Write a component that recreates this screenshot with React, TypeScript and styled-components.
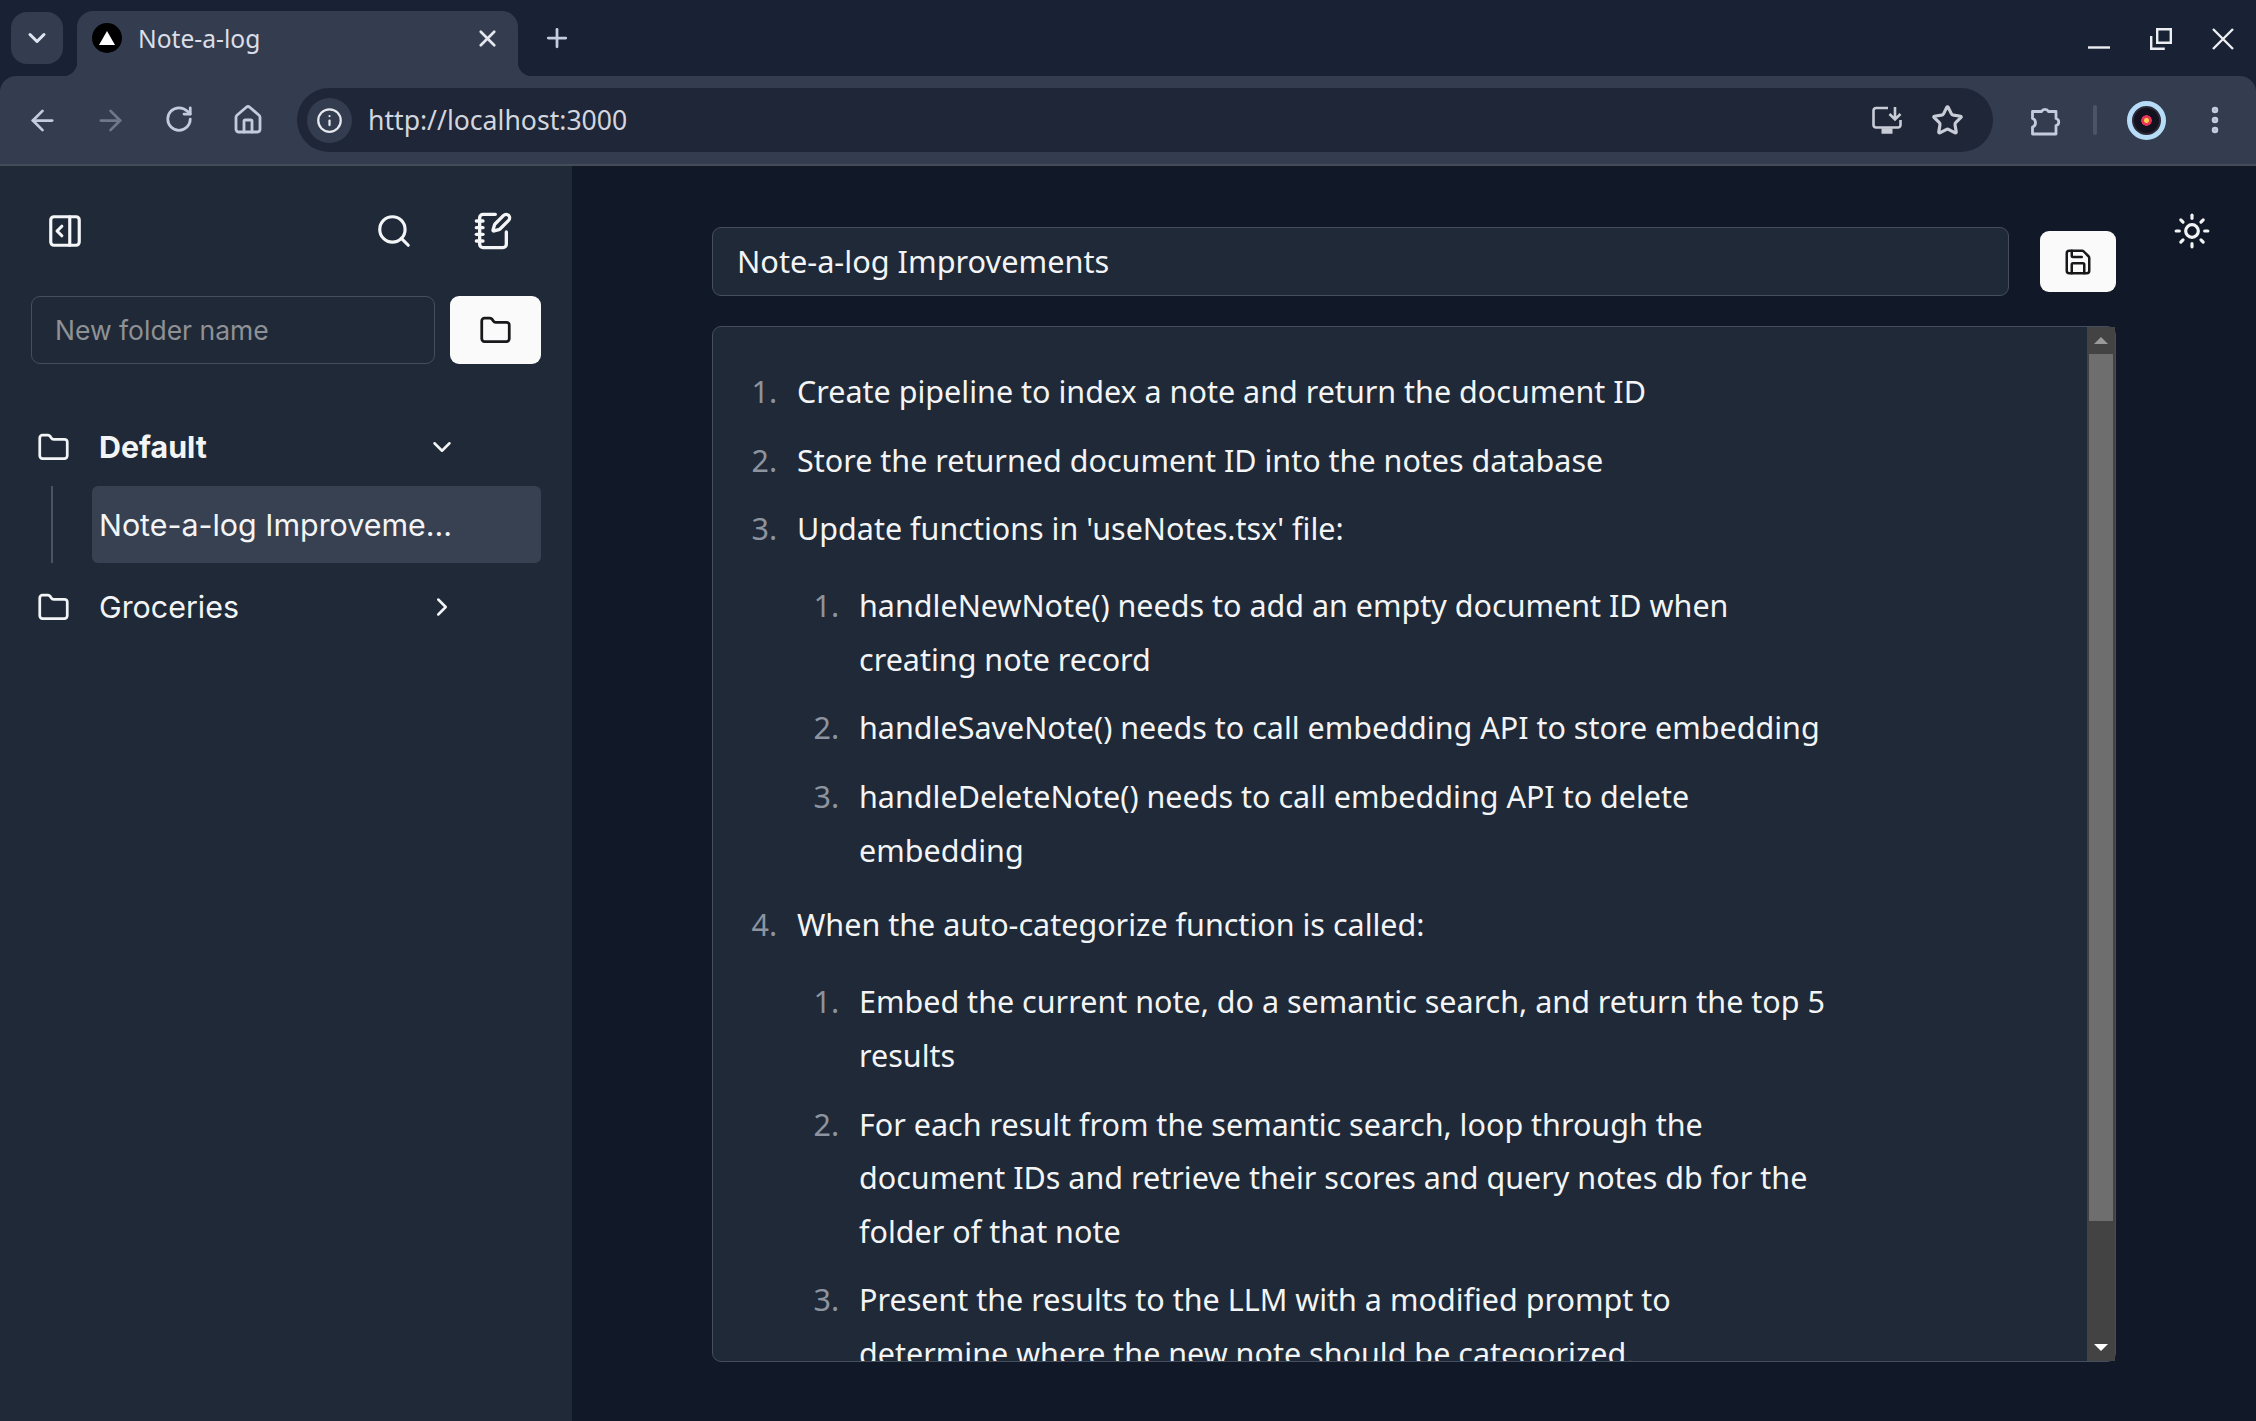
import React from 'react'
import styled, { createGlobalStyle } from 'styled-components'
import { ArrowLeft, ArrowRight, ChevronDown, ChevronRight, Folder, Home, Info, MoreVertical, NotebookPen, PanelRightOpen, Plus, RotateCw, Save, Search, Star, Sun, X } from 'lucide-react'

const GlobalStyle = createGlobalStyle`
  html, body {
    margin: 0;
    padding: 0;
    height: 100%;
    background: #111827;
    overflow: hidden;
  }
  * { box-sizing: border-box; }
`

const Page = styled.div`
  width: 2256px;
  height: 1421px;
  display: flex;
  flex-direction: column;
  font-family: 'Inter', sans-serif;
  color: #f9fafb;
`

const BrowserChrome = styled.header`
  background: #182234;
  font-family: 'Noto Sans', sans-serif;
`

const TabStrip = styled.div`
  height: 76px;
  display: flex;
  align-items: flex-end;
  padding-left: 11px;
`

const TabSearch = styled.div`
  width: 52px;
  height: 52px;
  margin-bottom: 12px;
  border-radius: 16px;
  background: #343d4f;
  color: #dfe4f0;
  display: flex;
  align-items: center;
  justify-content: center;
`

const Tab = styled.div`
  position: relative;
  width: 441px;
  height: 65px;
  margin-left: 14px;
  padding: 12px 17px 0 15px;
  border-radius: 16px 16px 0 0;
  background: #343d4f;
  display: flex;
  align-items: flex-start;
  font-size: 24.6px;
  line-height: 32px;
  color: #dbdee6;

  &::before,
  &::after {
    content: '';
    position: absolute;
    bottom: 0;
    width: 14px;
    height: 14px;
  }
  &::before {
    left: -14px;
    background: radial-gradient(circle at 0 0, transparent 14px, #343d4f 14.5px);
  }
  &::after {
    right: -14px;
    background: radial-gradient(circle at 100% 0, transparent 14px, #343d4f 14.5px);
  }
`

const Favicon = styled.div`
  width: 30px;
  height: 30px;
  border-radius: 50%;
  background: #000;
  margin-right: 16px;
  display: flex;
  align-items: center;
  justify-content: center;
`

const TabTitle = styled.span`
  flex: 1;
`

const TabClose = styled.div`
  height: 30px;
  display: flex;
  align-items: center;
  color: #e4e7ee;
`

const NewTab = styled.div`
  margin: 0 0 23px 24px;
  height: 30px;
  display: flex;
  align-items: center;
  color: #c5cde0;
`

const WindowControls = styled.div`
  margin-left: auto;
  height: 76px;
  display: flex;
  align-items: flex-start;
  padding: 28px 22px 0 0;
  color: #eceef2;
`

const WindowGlyph = styled.svg`
  width: 22px;
  height: 22px;
  display: block;
  margin-left: 40px;
`

const Toolbar = styled.div`
  height: 90px;
  background: #343d4f;
  border-bottom: 2px solid #454b57;
  border-radius: 16px 16px 0 0;
  display: flex;
  align-items: center;
`

const NavGroup = styled.div`
  display: flex;
  padding-left: 8px;
  width: 297px;
`

const NavButton = styled.div<{ $dim?: boolean }>`
  width: 68.5px;
  display: flex;
  justify-content: center;
  color: ${p => (p.$dim ? '#6f7788' : '#c3cbdd')};
`

const Omnibox = styled.div`
  width: 1696px;
  height: 64px;
  border-radius: 32px;
  background: #1e2637;
  display: flex;
  align-items: center;
  padding: 0 29px 0 10px;
`

const SiteInfo = styled.div`
  width: 45px;
  height: 45px;
  border-radius: 50%;
  background: #343d4f;
  color: #e6e8ee;
  display: flex;
  align-items: center;
  justify-content: center;
  margin-right: 16px;
`

const Url = styled.span`
  flex: 1;
  font-size: 26.6px;
  color: #d3d6de;
`

const OmniAction = styled.div`
  display: flex;
  align-items: center;
  color: #c8ccd6;
  margin-left: 29px;
`

const ToolbarEnd = styled.div`
  flex: 1;
  display: flex;
  align-items: center;
  color: #c3cbdd;
  padding-left: 37px;
`

const Divider = styled.div`
  width: 4px;
  height: 30px;
  border-radius: 2px;
  background: #4c5567;
  margin: 0 30px 0 31px;
`

const Avatar = styled.div`
  width: 39px;
  height: 39px;
  border-radius: 50%;
  background: radial-gradient(circle, #f7d24a 0 2px, #e8335a 3px 5px, #14121f 5.5px 12px, #2b2a36 13px 14px);
  border: 5px solid #b6dcf8;
`

const Kebab = styled.div`
  margin-left: 32px;
  color: #c3cbdd;
  display: flex;
`

const Body = styled.div`
  flex: 1;
  display: flex;
  min-height: 0;
`

const Sidebar = styled.aside`
  width: 572px;
  background: #1f2937;
  padding: 0 31px;
`

const SideTop = styled.div`
  height: 130px;
  display: flex;
  align-items: center;
  color: #f4f5f7;
  padding: 0 28px 0 15px;
`

const PanelToggle = styled.div`
  display: flex;
  margin-right: auto;
`

const SideIcon = styled.div`
  display: flex;
  margin-left: 60px;
`

const FolderForm = styled.div`
  display: flex;
  gap: 15px;
`

const FolderInput = styled.input`
  width: 404px;
  height: 68px;
  padding: 0 23px;
  background: transparent;
  border: 1px solid #444e5d;
  border-radius: 9px;
  font: 400 26.5px 'Inter', sans-serif;
  color: #f9fafb;
  &::placeholder {
    color: #8f9195;
    opacity: 1;
  }
`

const WhiteButton = styled.button`
  background: #fafafa;
  border: none;
  border-radius: 9px;
  color: #18181b;
  display: flex;
  align-items: center;
  justify-content: center;
  padding: 0;
`

const FolderButton = styled(WhiteButton)`
  width: 91px;
  height: 68px;
`

const Tree = styled.div`
  margin-top: 59px;
`

const FolderRow = styled.div<{ $open?: boolean }>`
  height: 48px;
  display: flex;
  align-items: center;
  padding-left: 6px;
  font-size: 30.4px;
  font-weight: ${p => (p.$open ? 700 : 400)};
  color: #f3f4f6;
`

const FolderName = styled.span`
  width: 328px;
  margin-left: 29px;
`

const NoteBranch = styled.div`
  display: flex;
  margin: 15px 0 20px 20px;
  border-left: 2px solid #4a5361;
  padding-left: 39px;
`

const NoteItem = styled.div`
  width: 100%;
  height: 77px;
  padding: 0 7px;
  border-radius: 6px;
  background: #374151;
  display: flex;
  align-items: center;
  font-size: 30.4px;
  color: #f3f4f6;
  white-space: nowrap;
`

const Main = styled.main`
  flex: 1;
  display: flex;
  padding-left: 140px;
  position: relative;
`

const Column = styled.div`
  width: 1404px;
  padding-top: 61px;
  display: flex;
  flex-direction: column;
`

const TitleRow = styled.div`
  display: flex;
  align-items: center;
  gap: 31px;
`

const TitleInput = styled.div`
  flex: 1;
  height: 69px;
  padding: 0 24px 2px;
  border: 1px solid #444e5d;
  border-radius: 9px;
  background: #1f2937;
  display: flex;
  align-items: center;
  font: 400 30.7px 'Noto Sans', sans-serif;
  color: #f3f4f6;
`

const SaveButton = styled(WhiteButton)`
  width: 76px;
  height: 61px;
`

const Editor = styled.div`
  margin-top: 30px;
  height: 1036px;
  border: 1px solid #444e5d;
  border-radius: 9px;
  background: #1f2937;
  display: flex;
`

const EditorContent = styled.div`
  flex: 1;
  overflow: hidden;
  padding-top: 21px;
  font-family: 'Noto Sans', sans-serif;
  font-size: 30.5px;
  line-height: 53.6px;
  color: #f3f4f6;
`

const NoteList = styled.ol<{ $nested?: boolean }>`
  margin: ${p => (p.$nested ? '23.5px 0 21px' : '17px 0 0')};
  padding: 0 0 0 ${p => (p.$nested ? '50px' : '72px')};
  width: ${p => (p.$nested ? 'auto' : '1113px')};
  & > li {
    padding-left: 12px;
    margin-top: 15px;
  }
  & > li::marker {
    color: #8d949f;
  }
`

const ScrollTrack = styled.div`
  width: 28px;
  background: #434343;
  display: flex;
  flex-direction: column;
`

const ScrollArrow = styled.div<{ $down?: boolean }>`
  height: 27px;
  display: flex;
  align-items: center;
  justify-content: center;
  &::before {
    content: '';
    width: 0;
    height: 0;
    border-left: 7px solid transparent;
    border-right: 7px solid transparent;
    ${p => (p.$down ? 'border-top: 7px solid #fff;' : 'border-bottom: 7px solid #9a9a9a;')}
  }
`

const ScrollThumb = styled.div`
  height: 867px;
  margin: 0 2px;
  background: #6e6e6e;
`

const ScrollRest = styled.div`
  flex: 1;
`

const ThemeToggle = styled.div`
  position: absolute;
  right: 45px;
  top: 46px;
  color: #f3f4f6;
  display: flex;
`

const InstallIcon = () => (
  <svg width="30" height="28" viewBox="0 0 30 28" fill="none" stroke="currentColor" strokeWidth="2.6">
    <path d="M16 2H4a2.5 2.5 0 0 0-2.5 2.5V19a2.5 2.5 0 0 0 2.5 2.5h22a2.5 2.5 0 0 0 2.5-2.5v-5" />
    <path d="M23 1v12M17.5 8l5.5 5.5L28.5 8" />
    <path d="M9.5 25h11" strokeWidth="5.5" />
  </svg>
)

const PuzzleIcon = () => (
  <svg width="32" height="32" viewBox="0 0 32 32" fill="none" stroke="currentColor" strokeWidth="2.8" strokeLinejoin="round">
    <path d="M2.5 7.5h9a4 4 0 0 1 7 0h7.5v7a3.6 3.6 0 0 1 0 7v8.5H2.5v-7a4.5 4.5 0 0 0 0-8.5z" />
  </svg>
)

const App: React.FC = () => {
  return (
    <Page>
      <GlobalStyle />
      <BrowserChrome>
        <TabStrip>
          <TabSearch><ChevronDown size={28} strokeWidth={2.6} /></TabSearch>
          <Tab>
            <Favicon>
              <svg width="16" height="14" viewBox="0 0 16 14"><path d="M8 0l8 14H0z" fill="#fff" /></svg>
            </Favicon>
            <TabTitle>Note-a-log</TabTitle>
            <TabClose><X size={27} strokeWidth={2.4} /></TabClose>
          </Tab>
          <NewTab><Plus size={30} strokeWidth={2.2} /></NewTab>
          <WindowControls>
            <WindowGlyph viewBox="0 0 22 22" fill="none" stroke="currentColor" strokeWidth="2.4">
              <path d="M0 19.5h22" />
            </WindowGlyph>
            <WindowGlyph viewBox="0 0 22 22" fill="none" stroke="currentColor" strokeWidth="2.4">
              <path d="M7.2 1.2h13.6v13.6H7.2z" />
              <path d="M1.2 8v12.8h13.6" />
            </WindowGlyph>
            <WindowGlyph viewBox="0 0 22 22" fill="none" stroke="currentColor" strokeWidth="2.4">
              <path d="M1 1l20 20M21 1L1 21" />
            </WindowGlyph>
          </WindowControls>
        </TabStrip>
        <Toolbar>
          <NavGroup>
            <NavButton><ArrowLeft size={33} strokeWidth={2} /></NavButton>
            <NavButton $dim><ArrowRight size={33} strokeWidth={2} /></NavButton>
            <NavButton><RotateCw size={30} strokeWidth={2.2} /></NavButton>
            <NavButton><Home size={32} strokeWidth={2.1} /></NavButton>
          </NavGroup>
          <Omnibox>
            <SiteInfo><Info size={27} strokeWidth={2} /></SiteInfo>
            <Url>http://localhost:3000</Url>
            <OmniAction><InstallIcon /></OmniAction>
            <OmniAction><Star size={33} strokeWidth={2.3} /></OmniAction>
          </Omnibox>
          <ToolbarEnd>
            <PuzzleIcon />
            <Divider />
            <Avatar />
            <Kebab><MoreVertical size={34} strokeWidth={2.6} /></Kebab>
          </ToolbarEnd>
        </Toolbar>
      </BrowserChrome>
      <Body>
        <Sidebar>
          <SideTop>
            <PanelToggle><PanelRightOpen size={38} strokeWidth={2} /></PanelToggle>
            <SideIcon><Search size={38} strokeWidth={2} /></SideIcon>
            <SideIcon><NotebookPen size={40} strokeWidth={2} /></SideIcon>
          </SideTop>
          <FolderForm>
            <FolderInput placeholder="New folder name" readOnly />
            <FolderButton><Folder size={33} strokeWidth={2} /></FolderButton>
          </FolderForm>
          <Tree>
            <FolderRow $open>
              <Folder size={33} strokeWidth={2} />
              <FolderName>Default</FolderName>
              <ChevronDown size={30} strokeWidth={2} />
            </FolderRow>
            <NoteBranch>
              <NoteItem>Note-a-log Improveme...</NoteItem>
            </NoteBranch>
            <FolderRow>
              <Folder size={33} strokeWidth={2} />
              <FolderName>Groceries</FolderName>
              <ChevronRight size={30} strokeWidth={2} />
            </FolderRow>
          </Tree>
        </Sidebar>
        <Main>
          <Column>
            <TitleRow>
              <TitleInput>Note-a-log Improvements</TitleInput>
              <SaveButton><Save size={30} strokeWidth={2} /></SaveButton>
            </TitleRow>
            <Editor>
              <EditorContent>
                <NoteList>
                  <li>Create pipeline to index a note and return the document ID</li>
                  <li>Store the returned document ID into the notes database</li>
                  <li>
                    Update functions in 'useNotes.tsx' file:
                    <NoteList $nested>
                      <li>handleNewNote() needs to add an empty document ID when creating note record</li>
                      <li>handleSaveNote() needs to call embedding API to store embedding</li>
                      <li>handleDeleteNote() needs to call embedding API to delete embedding</li>
                    </NoteList>
                  </li>
                  <li>
                    When the auto-categorize function is called:
                    <NoteList $nested>
                      <li>Embed the current note, do a semantic search, and return the top 5 results</li>
                      <li>For each result from the semantic search, loop through the document IDs and retrieve their scores and query notes db for the folder of that note</li>
                      <li>Present the results to the LLM with a modified prompt to determine where the new note should be categorized.</li>
                    </NoteList>
                  </li>
                </NoteList>
              </EditorContent>
              <ScrollTrack>
                <ScrollArrow />
                <ScrollThumb />
                <ScrollRest />
                <ScrollArrow $down />
              </ScrollTrack>
            </Editor>
          </Column>
          <ThemeToggle><Sun size={38} strokeWidth={2} /></ThemeToggle>
        </Main>
      </Body>
    </Page>
  )
}

export default App
